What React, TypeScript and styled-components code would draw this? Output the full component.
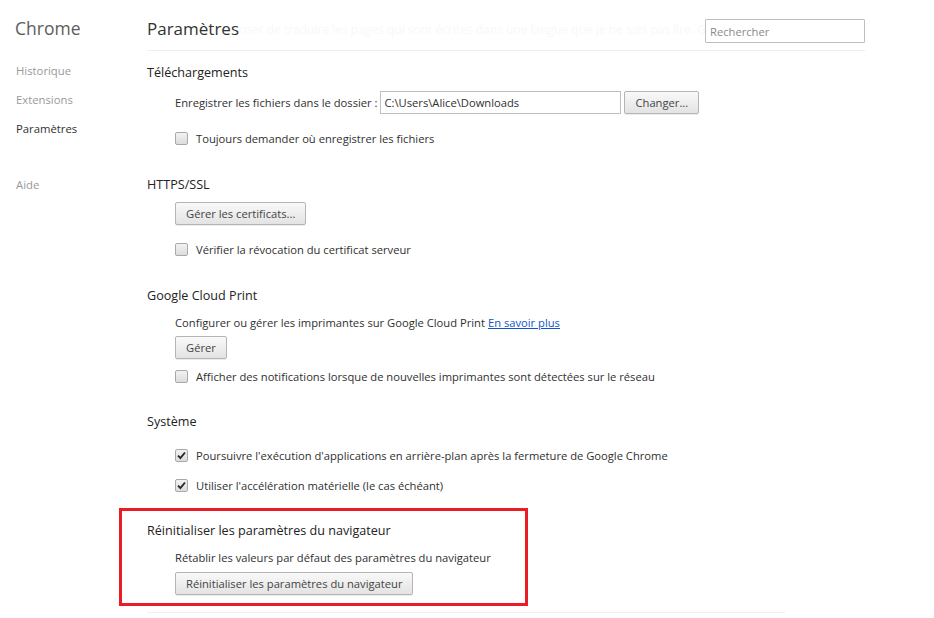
import React from "react";
import styled, { createGlobalStyle } from "styled-components";

const Global = createGlobalStyle`
  html, body { margin: 0; padding: 0; background: #fff; }
  body { font-family: "Open Sans", "Noto Sans", sans-serif; color: #303030; }
  * { box-sizing: border-box; }
`;

const Page = styled.div`
  display: flex;
  width: 934px;
  height: 618px;
  overflow: hidden;
  background: #fff;
`;

const Sidebar = styled.nav`
  width: 147px;
  flex: none;
  padding-left: 15px;
  display: flex;
  flex-direction: column;
`;

const Brand = styled.div`
  height: 50px;
  padding-top: 6px;
  display: flex;
  align-items: center;
  font-size: 17.5px;
  color: #5c5c5c;
`;

const NavItem = styled.div<{ $active?: boolean; $gap?: number }>`
  height: 29px;
  margin-top: ${(p) => p.$gap ?? 0}px;
  display: flex;
  align-items: center;
  padding-left: 1px;
  font-size: 11.3px;
  color: ${(p) => (p.$active ? "#303030" : "#999")};
`;

const Main = styled.main`
  width: 718px;
  flex: none;
  display: flex;
  flex-direction: column;
`;

const Header = styled.header`
  height: 51px;
  border-bottom: 1px solid #eeeeee;
  display: flex;
  align-items: center;
  padding-top: 6px;
`;

const PageTitle = styled.h1`
  margin: 0;
  font-size: 17px;
  font-weight: 400;
  color: #333;
  flex: none;
`;

const Ghost = styled.span`
  flex: 1;
  min-width: 0;
  white-space: nowrap;
  font-size: 12px;
  color: #f8f8f8;
  padding-top: 2px;
`;

const Search = styled.input`
  width: 160px;
  height: 24px;
  align-self: flex-start;
  margin-top: 13px;
  border: 1px solid #bfbfbf;
  border-radius: 1px;
  padding: 0 4px;
  font-family: inherit;
  font-size: 11.2px;
  color: #333;
  outline: none;
  &::placeholder { color: #8a8a8a; }
`;

const Section = styled.section<{ $top: number }>`
  margin-top: ${(p) => p.$top}px;
  display: flex;
  flex-direction: column;
`;

const SectionTitle = styled.h3`
  margin: 0;
  height: 22px;
  display: flex;
  align-items: center;
  font-size: 12.6px;
  font-weight: 400;
  color: #222;
`;

const Row = styled.div<{ $top: number; $h?: number }>`
  margin-top: ${(p) => p.$top}px;
  height: ${(p) => p.$h ?? 24}px;
  padding-left: 28px;
  display: flex;
  align-items: center;
  font-size: 11.2px;
  color: #303030;
  white-space: nowrap;
`;

const Label = styled.span`
  margin-right: 3px;
`;

const PathInput = styled.input`
  width: 241px;
  height: 23px;
  border: 1px solid #bfbfbf;
  padding: 0 3px;
  font-family: inherit;
  font-size: 11.2px;
  color: #303030;
  outline: none;
`;

const Button = styled.button<{ $ml?: number }>`
  height: 23px;
  margin-left: ${(p) => p.$ml ?? 0}px;
  padding: 0 10px;
  border: 1px solid #b5b5b5;
  border-radius: 2px;
  background: linear-gradient(#f9f9f9, #e3e3e3);
  box-shadow: 0 1px 0 rgba(0, 0, 0, 0.08);
  font-family: inherit;
  font-size: 11.2px;
  color: #444;
  cursor: default;
`;

const Box = styled.span`
  width: 13px;
  height: 13px;
  flex: none;
  margin-right: 8px;
  border: 1px solid #a9a9a9;
  border-radius: 2px;
  background: linear-gradient(#f2f2f2, #dcdcdc);
  display: flex;
  align-items: center;
  justify-content: center;
`;

const Link = styled.a`
  margin-left: 3px;
  color: #1155cc;
  text-decoration: underline;
  cursor: pointer;
`;

const Highlight = styled.div`
  margin-top: 11px;
  margin-left: -28px;
  width: 409px;
  border: 3px solid #ec1c24;
  padding: 8px 0 8px 25px;
  display: flex;
  flex-direction: column;
`;

const Footer = styled.div`
  margin-top: 6px;
  width: 638px;
  border-top: 1px solid #eeeeee;
`;

const Check = () => (
  <svg width="9" height="9" viewBox="0 0 9 9">
    <path d="M1 4.6 L3.4 7 L8 1.5" fill="none" stroke="#2a2a2a" strokeWidth="1.9" />
  </svg>
);

const CheckRow = ({ top, checked, children }: { top: number; checked?: boolean; children: React.ReactNode }) => (
  <Row $top={top}>
    <Box>{checked && <Check />}</Box>
    {children}
  </Row>
);

export default function App() {
  return (
    <>
      <Global />
      <Page>
        <Sidebar>
          <Brand>Chrome</Brand>
          <NavItem $gap={6}>Historique</NavItem>
          <NavItem>Extensions</NavItem>
          <NavItem $active>Paramètres</NavItem>
          <NavItem $gap={27}>Aide</NavItem>
        </Sidebar>
        <Main>
          <Header>
            <PageTitle>Paramètres</PageTitle>
            <Ghost>oser de traduire les pages qui sont écrites dans une langue que je ne sais pas lire. Gérer</Ghost>
            <Search placeholder="Rechercher" />
          </Header>

          <Section $top={10}>
            <SectionTitle>Téléchargements</SectionTitle>
            <Row $top={8} $h={23}>
              <Label>Enregistrer les fichiers dans le dossier :</Label>
              <PathInput defaultValue="C:\Users\Alice\Downloads" />
              <Button $ml={3}>Changer...</Button>
            </Row>
            <CheckRow top={12}>Toujours demander où enregistrer les fichiers</CheckRow>
          </Section>

          <Section $top={23}>
            <SectionTitle>HTTPS/SSL</SectionTitle>
            <Row $top={7} $h={23}>
              <Button>Gérer les certificats...</Button>
            </Row>
            <CheckRow top={12}>Vérifier la révocation du certificat serveur</CheckRow>
          </Section>

          <Section $top={23}>
            <SectionTitle>Google Cloud Print</SectionTitle>
            <Row $top={6} $h={20}>
              Configurer ou gérer les imprimantes sur Google Cloud Print
              <Link>En savoir plus</Link>
            </Row>
            <Row $top={4} $h={23}>
              <Button>Gérer</Button>
            </Row>
            <CheckRow top={5}>
              Afficher des notifications lorsque de nouvelles imprimantes sont détectées sur le réseau
            </CheckRow>
          </Section>

          <Section $top={22}>
            <SectionTitle>Système</SectionTitle>
            <CheckRow top={11} checked>
              Poursuivre l'exécution d'applications en arrière-plan après la fermeture de Google Chrome
            </CheckRow>
            <CheckRow top={6} checked>
              Utiliser l'accélération matérielle (le cas échéant)
            </CheckRow>
          </Section>

          <Highlight>
            <SectionTitle>Réinitialiser les paramètres du navigateur</SectionTitle>
            <Row $top={6} $h={20}>Rétablir les valeurs par défaut des paramètres du navigateur</Row>
            <Row $top={5} $h={23}>
              <Button>Réinitialiser les paramètres du navigateur</Button>
            </Row>
          </Highlight>
          <Footer />
        </Main>
      </Page>
    </>
  );
}
